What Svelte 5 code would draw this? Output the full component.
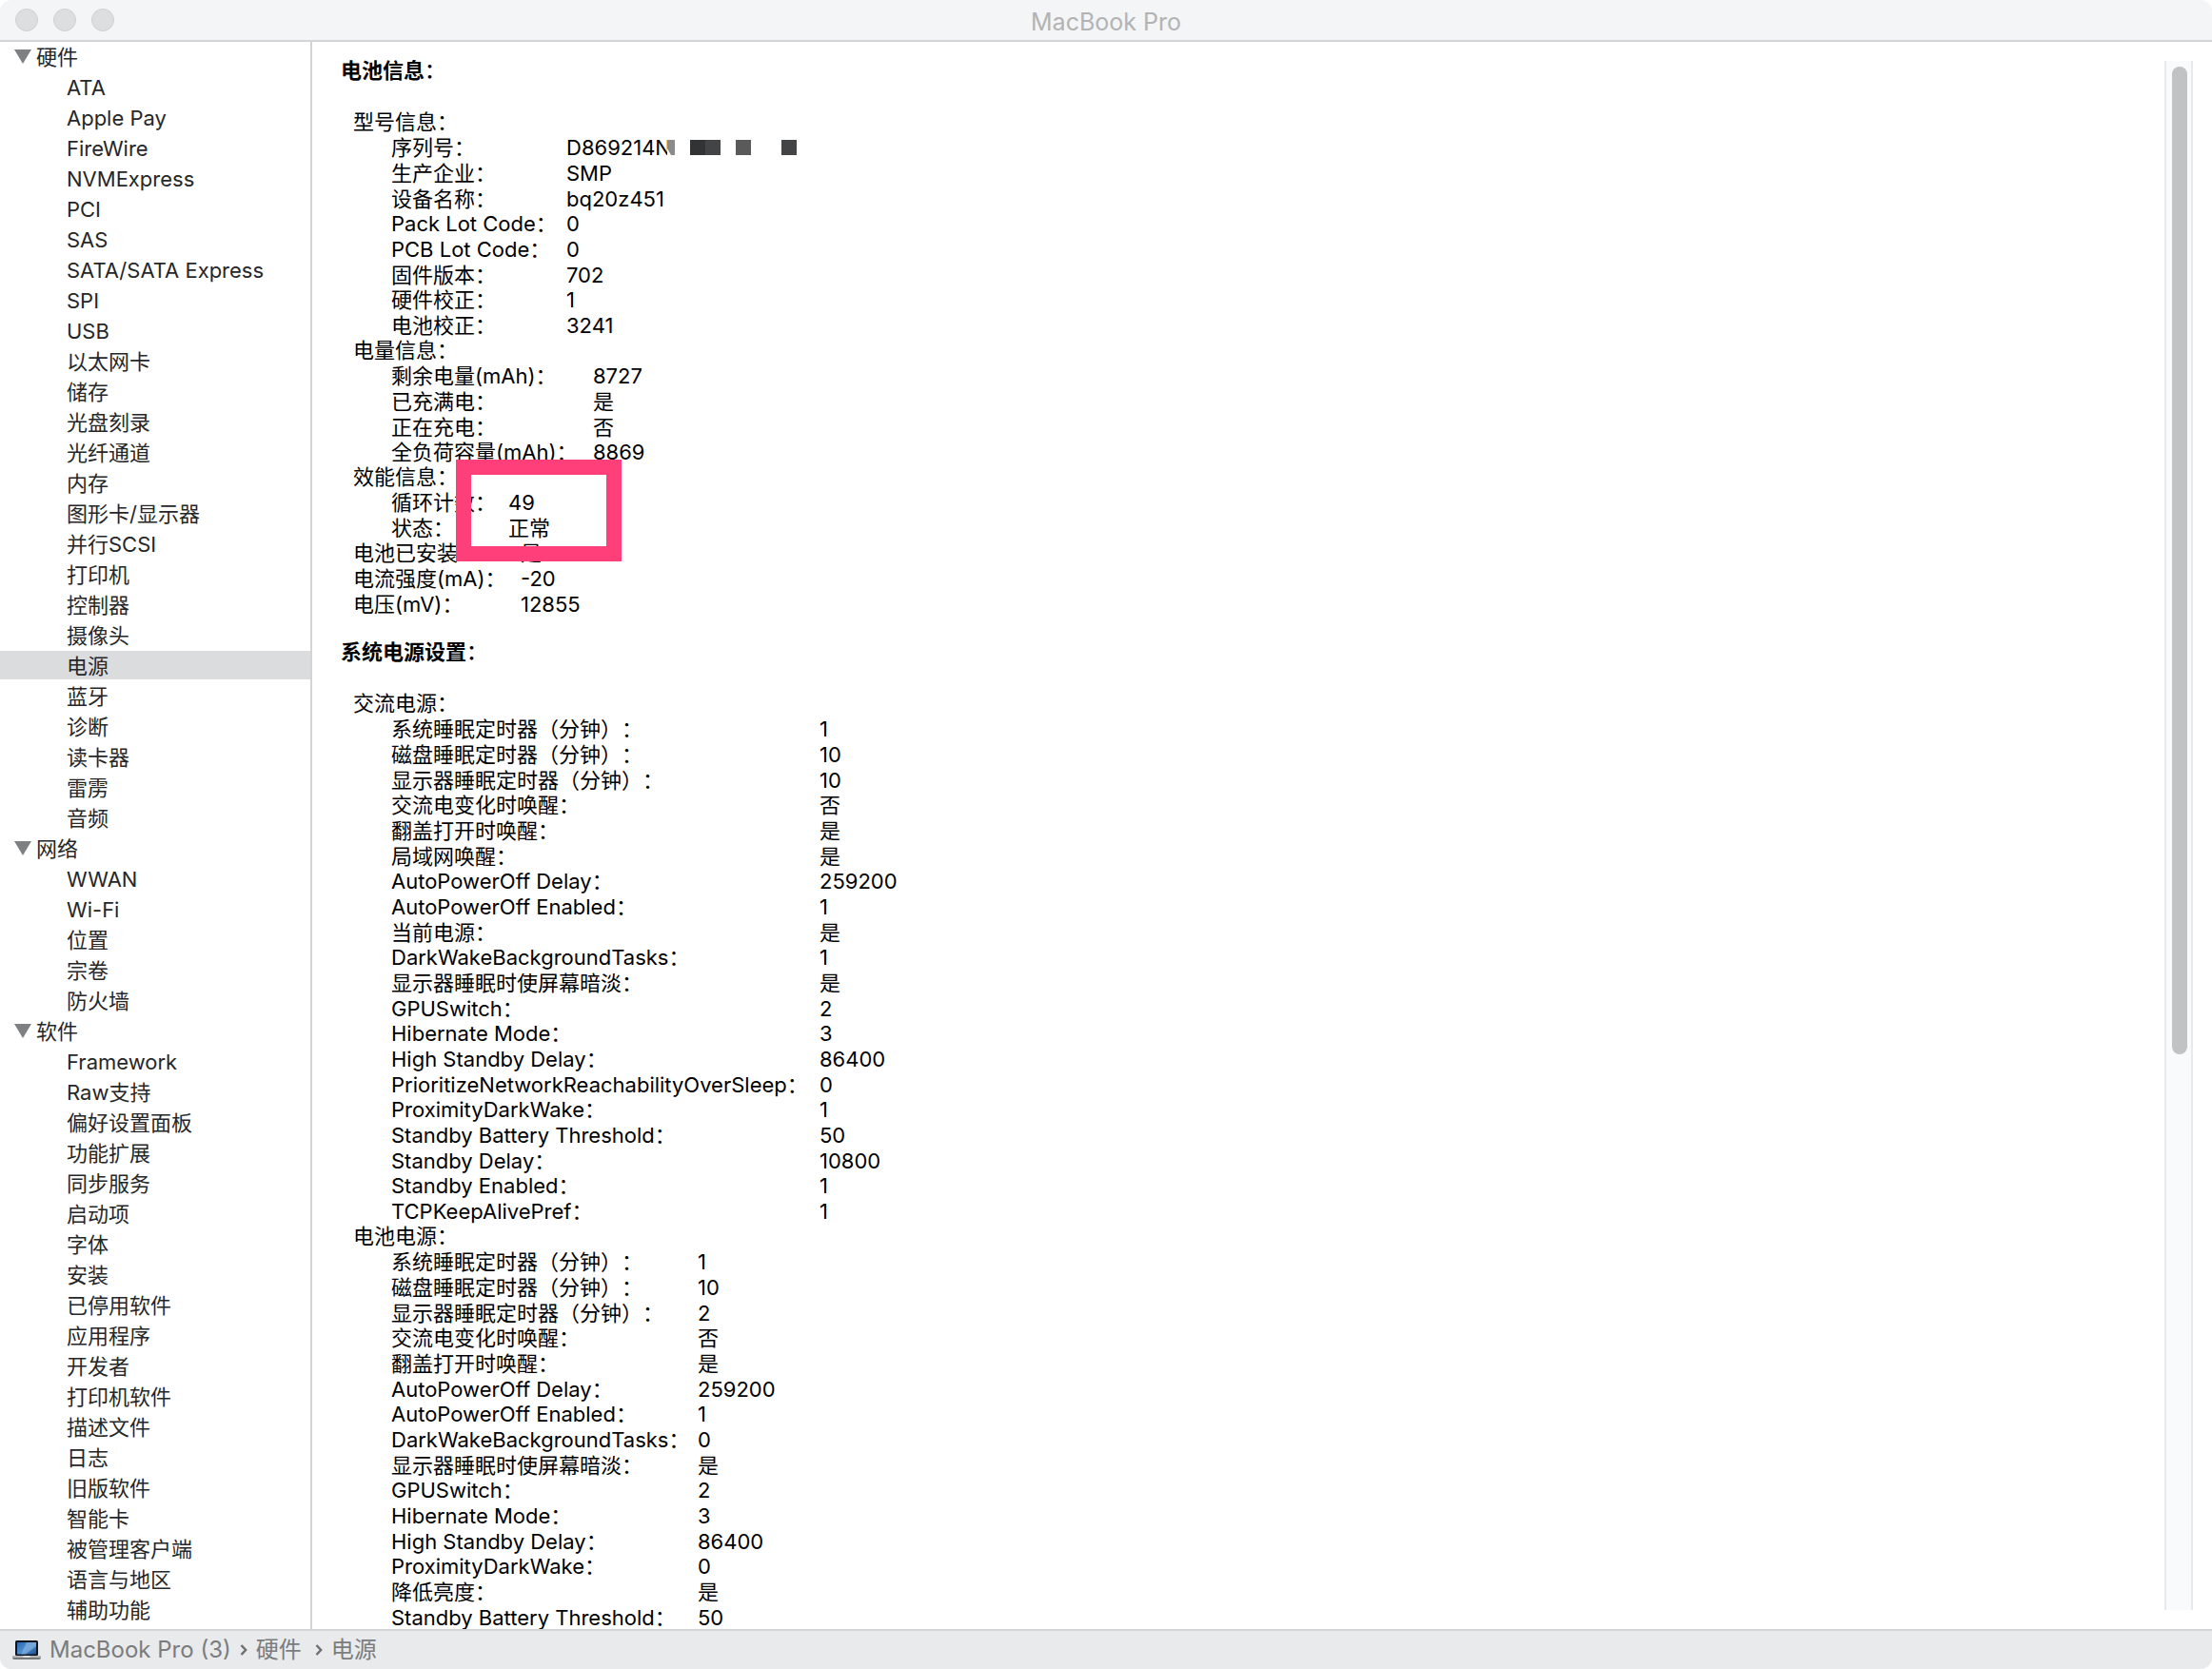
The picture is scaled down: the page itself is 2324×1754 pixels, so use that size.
<script>
  const groups = [
    {
      name: '硬件',
      items: [
        'ATA', 'Apple Pay', 'FireWire', 'NVMExpress', 'PCI', 'SAS', 'SATA/SATA Express', 'SPI', 'USB',
        '以太网卡', '储存', '光盘刻录', '光纤通道', '内存', '图形卡/显示器', '并行SCSI', '打印机',
        '控制器', '摄像头', '电源', '蓝牙', '诊断', '读卡器', '雷雳', '音频'
      ]
    },
    { name: '网络', items: ['WWAN', 'Wi-Fi', '位置', '宗卷', '防火墙'] },
    {
      name: '软件',
      items: [
        'Framework', 'Raw支持', '偏好设置面板', '功能扩展', '同步服务', '启动项', '字体', '安装',
        '已停用软件', '应用程序', '开发者', '打印机软件', '描述文件', '日志', '旧版软件', '智能卡',
        '被管理客户端', '语言与地区', '辅助功能'
      ]
    }
  ];

  const sections = [
    {
      title: '电池信息',
      blocks: [
        {
          title: '型号信息',
          kind: 'model',
          rows: [
            ['序列号', 'D869214N'], ['生产企业', 'SMP'], ['设备名称', 'bq20z451'], ['Pack Lot Code', '0'],
            ['PCB Lot Code', '0'], ['固件版本', '702'], ['硬件校正', '1'], ['电池校正', '3241']
          ]
        },
        {
          title: '电量信息',
          kind: 'charge',
          rows: [
            ['剩余电量(mAh)', '8727'], ['已充满电', '是'], ['正在充电', '否'], ['全负荷容量(mAh)', '8869']
          ]
        },
        { title: '效能信息', kind: 'health', rows: [['循环计数', '49'], ['状态', '正常']] },
        { kind: 'summary', rows: [['电池已安装', '是'], ['电流强度(mA)', '-20'], ['电压(mV)', '12855']] }
      ]
    },
    {
      title: '系统电源设置',
      blocks: [
        {
          title: '交流电源',
          kind: 'mains',
          rows: [
            ['系统睡眠定时器（分钟）', '1'], ['磁盘睡眠定时器（分钟）', '10'],
            ['显示器睡眠定时器（分钟）', '10'], ['交流电变化时唤醒', '否'], ['翻盖打开时唤醒', '是'],
            ['局域网唤醒', '是'], ['AutoPowerOff Delay', '259200'], ['AutoPowerOff Enabled', '1'],
            ['当前电源', '是'], ['DarkWakeBackgroundTasks', '1'], ['显示器睡眠时使屏幕暗淡', '是'],
            ['GPUSwitch', '2'], ['Hibernate Mode', '3'], ['High Standby Delay', '86400'],
            ['PrioritizeNetworkReachabilityOverSleep', '0'], ['ProximityDarkWake', '1'],
            ['Standby Battery Threshold', '50'], ['Standby Delay', '10800'], ['Standby Enabled', '1'],
            ['TCPKeepAlivePref', '1']
          ]
        },
        {
          title: '电池电源',
          kind: 'battery',
          rows: [
            ['系统睡眠定时器（分钟）', '1'], ['磁盘睡眠定时器（分钟）', '10'],
            ['显示器睡眠定时器（分钟）', '2'], ['交流电变化时唤醒', '否'], ['翻盖打开时唤醒', '是'],
            ['AutoPowerOff Delay', '259200'], ['AutoPowerOff Enabled', '1'],
            ['DarkWakeBackgroundTasks', '0'], ['显示器睡眠时使屏幕暗淡', '是'], ['GPUSwitch', '2'],
            ['Hibernate Mode', '3'], ['High Standby Delay', '86400'], ['ProximityDarkWake', '0'],
            ['降低亮度', '是'], ['Standby Battery Threshold', '50']
          ]
        }
      ]
    }
  ];

  let selected = $state('电源');
</script>

{#snippet chevron()}
  <svg class="chevron" viewBox="0 0 8 14" aria-hidden="true"><path d="M1.5 2 6.2 7 1.5 12" /></svg>
{/snippet}

<div class="window">
  <header>
    <div class="lights">
      <button aria-label="关闭"></button>
      <button aria-label="最小化"></button>
      <button aria-label="缩放"></button>
    </div>
    <h1>MacBook Pro</h1>
  </header>

  <div class="body">
    <nav class="sidebar" aria-label="类别">
      {#each groups as group}
        <button class="group">
          <svg viewBox="0 0 18 15" aria-hidden="true"><path d="M0 0H18L9 15Z" /></svg>{group.name}
        </button>
        {#each group.items as item}
          <button class="item" class:selected={item === selected} onclick={() => (selected = item)}>{item}</button>
        {/each}
      {/each}
    </nav>

    <main>
      <div class="report">
        {#each sections as section}
          <section>
            <h2>{section.title}<span>：</span></h2>
            {#each section.blocks as block}
              {#if block.title}<h3>{block.title}：</h3>{/if}
              <div class="block {block.kind}">
                <table>
                  <tbody>
                    {#each block.rows as [label, value], i}
                      <tr>
                        <th scope="row">{label}：</th>
                        <td>
                          {#if block.kind === 'model' && i === 0}
                            <span class="serial">{value}<svg viewBox="0 0 136 16" aria-hidden="true">
                                <path class="blank" d="M0 0H24V16H0Z" />
                                <path class="m1" d="M0 0H8V16H4L0 9Z" />
                                <path class="m2" d="M24 0H40V16H24Z" />
                                <path class="m3" d="M40 0H56V16H40Z" />
                                <path class="m4" d="M72 0H88V16H72Z" />
                                <path class="m3" d="M120 0H136V16H120Z" />
                              </svg></span>
                          {:else}{value}{/if}
                        </td>
                      </tr>
                    {/each}
                  </tbody>
                </table>
                {#if block.kind === 'health'}<div class="marker"></div>{/if}
              </div>
            {/each}
          </section>
        {/each}
      </div>
      <div class="track" aria-hidden="true"><div class="thumb"></div></div>
    </main>
  </div>

  <footer>
    <svg class="laptop" viewBox="0 0 30 20" aria-hidden="true">
      <defs>
        <linearGradient id="screen" x1="0" y1="0" x2="1" y2="1">
          <stop offset="0" stop-color="#2c66ad" />
          <stop offset="0.5" stop-color="#4f8fd0" />
          <stop offset="1" stop-color="#1f4f92" />
        </linearGradient>
      </defs>
      <rect x="3" y="0" width="24" height="16" rx="1.5" fill="#10151d" />
      <rect x="5" y="2" width="20" height="12.500" fill="url(#screen)" />
      <path d="M15 2H25V6L14 14.500H9Z" fill="#9cc3ea" opacity="0.5" />
      <path d="M0 16H30V18Q30 19.500 28 19.500H2Q0 19.500 0 18Z" fill="#b4b6b8" />
      <path d="M0 18H30Q29.500 20 28 20H2Q.5 20 0 18Z" fill="#77797b" />
      <path d="M11.500 16H18.500V17.500H11.500Z" fill="#e8e9ea" />
    </svg>
    <span>MacBook Pro (3)</span>
    {@render chevron()}
    <span class="category">硬件</span>
    {@render chevron()}
    <span>电源</span>
  </footer>
</div>

<style>
  :global(body) {
    background: #fff;
  }
  .window {
    display: flex;
    flex-direction: column;
    height: 100vh;
    overflow: hidden;
    color: #000;
    font-family: Inter, 'Noto Sans CJK SC', sans-serif;
    font-size: 22px;
    text-spacing-trim: space-all;
  }
  button {
    border: 0;
    padding: 0;
    background: none;
    font: inherit;
    color: inherit;
  }
  header {
    display: grid;
    grid-template-columns: 1fr auto 1fr;
    align-items: center;
    height: 42px;
    flex: none;
    background: #f4f5f7;
    border-bottom: 2px solid #d3d4d6;
    border-radius: 12px 12px 0 0;
  }
  .lights {
    display: flex;
    gap: 16px;
    padding-left: 16px;
  }
  .lights button {
    box-sizing: border-box;
    width: 24px;
    height: 24px;
    border-radius: 50%;
    border: 1px solid #cfd0d1;
    background: #dddedf;
  }
  h1 {
    margin: 0;
    padding-top: 3px;
    font-size: 25px;
    line-height: 30px;
    font-weight: 400;
    color: #b2b3b4;
  }
  .body {
    display: flex;
    flex: 1;
    min-height: 0;
  }
  .sidebar {
    display: flex;
    flex-direction: column;
    flex: none;
    width: 326px;
    border-right: 2px solid #d3d4d6;
    overflow: hidden;
    color: #262728;
  }
  .sidebar button {
    display: flex;
    align-items: center;
    flex: none;
    height: 30px;
    margin-bottom: 2px;
    padding-top: 2px;
    line-height: 28px;
    text-align: left;
    white-space: nowrap;
  }
  .sidebar .group {
    gap: 5px;
    padding-left: 15px;
  }
  .group svg {
    width: 18px;
    height: 15px;
    margin-bottom: 2px;
    fill: #7f8082;
  }
  .sidebar .item {
    padding-left: 70px;
  }
  .sidebar .selected {
    background: #dbdcde;
  }
  main {
    display: flex;
    flex: 1;
    min-width: 0;
    overflow: hidden;
  }
  .report {
    flex: 1;
    min-width: 0;
    padding: 17px 0 0 30px;
    overflow: hidden;
  }
  section {
    margin-bottom: 24px;
  }
  h2,
  h3 {
    margin: 0;
    font-size: 22px;
    line-height: 26px;
  }
  h2 {
    margin-bottom: 28px;
    font-weight: 700;
  }
  h2 span {
    font-weight: 500;
  }
  h3 {
    padding-left: 13px;
    line-height: 27px;
    font-weight: 400;
  }
  .block {
    position: relative;
    padding-left: 53px;
  }
  .block.summary {
    padding-left: 13px;
  }
  table {
    border-collapse: collapse;
    table-layout: fixed;
    width: 100%;
  }
  tr {
    height: 27px;
    line-height: 26px;
  }
  tr:nth-child(3n + 1) {
    height: 26px;
  }
  th,
  td {
    padding: 0;
    font-weight: 400;
    text-align: left;
    white-space: nowrap;
  }
  .model th {
    width: 184px;
  }
  .charge th {
    width: 212px;
  }
  .health th {
    width: 123px;
  }
  .summary th {
    width: 176px;
  }
  .mains th {
    width: 450px;
  }
  .battery th {
    width: 322px;
  }
  .serial {
    display: flex;
    align-items: center;
  }
  .serial svg {
    width: 136px;
    height: 16px;
    margin-left: -4px;
  }
  .blank {
    fill: #fff;
  }
  .m1 {
    fill: #8a8b8c;
  }
  .m2 {
    fill: #323334;
  }
  .m3 {
    fill: #434445;
  }
  .m4 {
    fill: #5a5a5b;
  }
  .marker {
    position: absolute;
    box-sizing: border-box;
    left: 121px;
    top: -32px;
    width: 174px;
    height: 107px;
    border: 16px solid #ff3f7a;
    z-index: 1;
  }
  .track {
    box-sizing: border-box;
    flex: none;
    width: 30px;
    margin: 20px 20px 20px 0;
    padding: 6px;
    border: solid #e8e9eb;
    border-width: 0 2px;
    background: #f8fafc;
  }
  .thumb {
    width: 16px;
    height: 64.25%;
    margin: 0 auto;
    border-radius: 8px;
    background: #c1c2c3;
  }
  footer {
    display: flex;
    align-items: center;
    flex: none;
    height: 40px;
    padding-left: 13px;
    gap: 9px;
    border-top: 2px solid #d3d4d6;
    border-radius: 0 0 12px 12px;
    background: #e9eaec;
    color: #7b7c7e;
    font-size: 24px;
    line-height: 40px;
  }
  .category {
    padding-right: 5px;
  }
  .laptop {
    width: 30px;
    height: 20px;
  }
  .chevron {
    width: 8px;
    height: 14px;
    fill: none;
    stroke: #6d6e70;
    stroke-width: 2.4;
  }
</style>
